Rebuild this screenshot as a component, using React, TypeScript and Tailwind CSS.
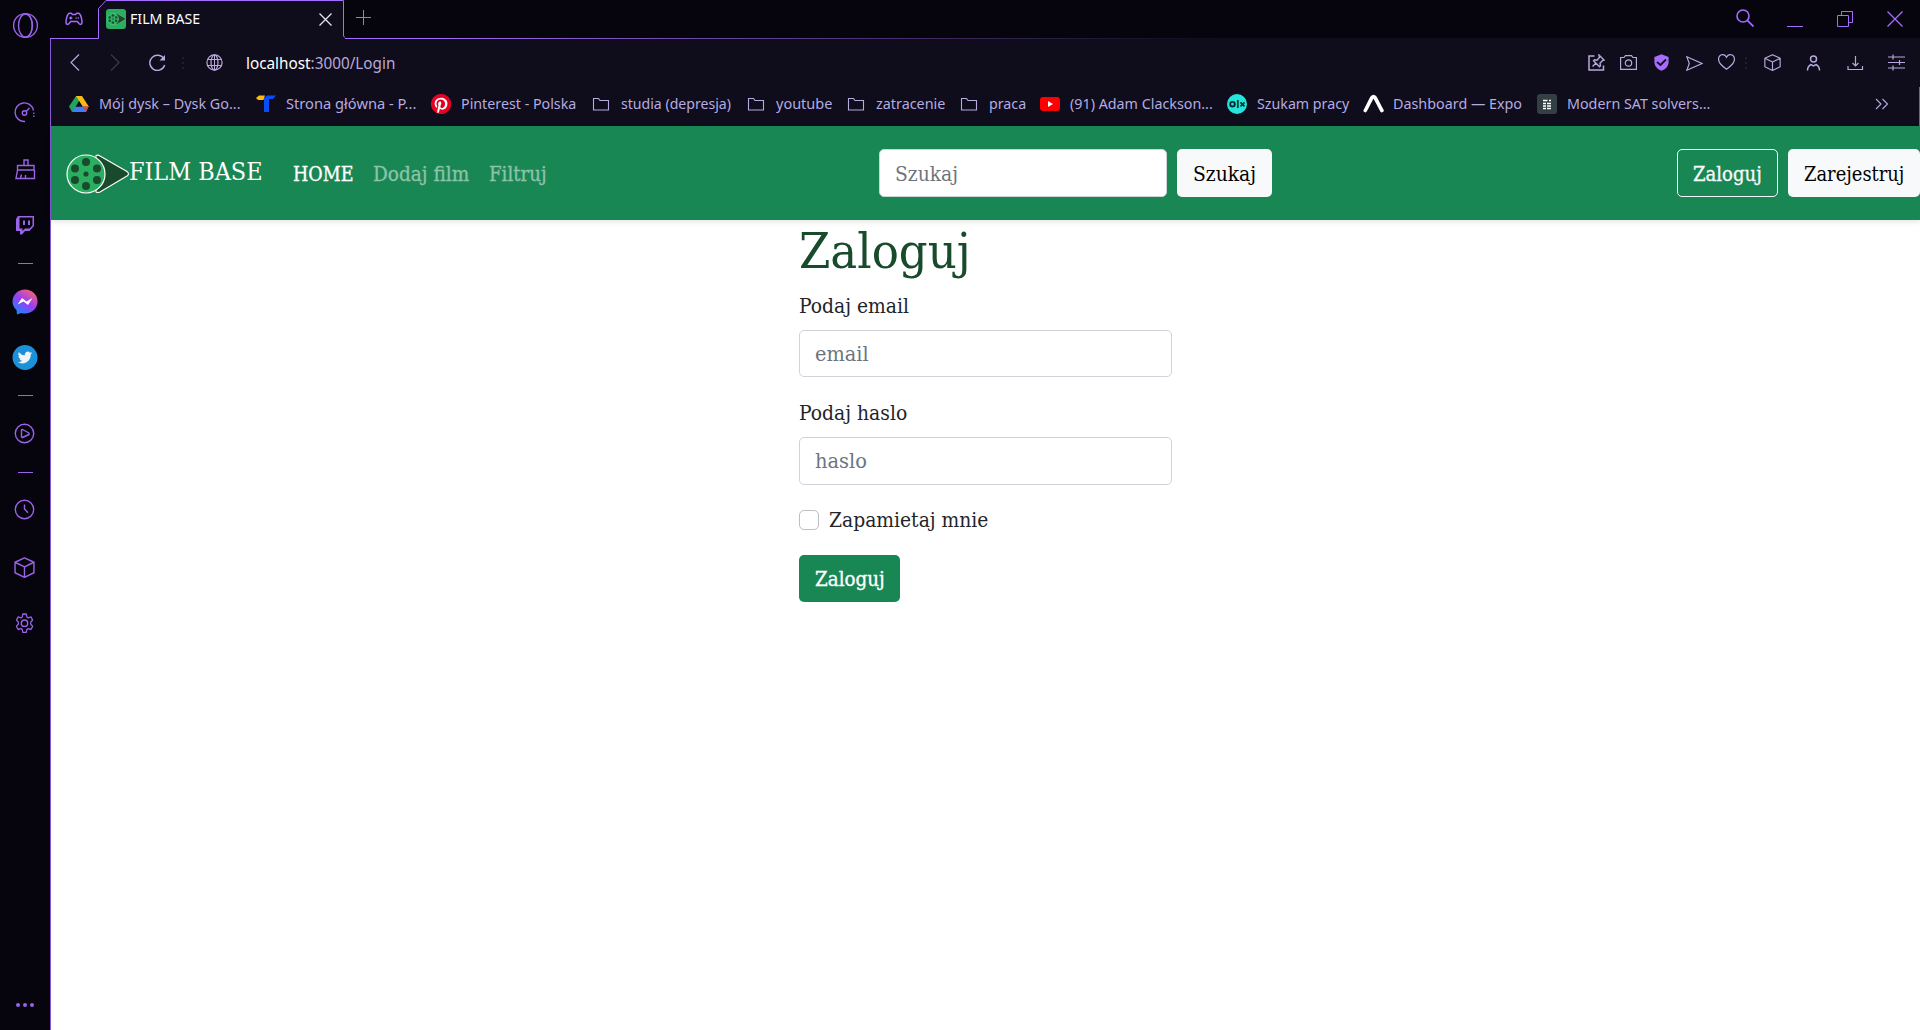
import { useLayoutEffect, useRef, useState, type ReactNode } from "react";

/** Text that is condensed or widened to occupy a known width. */
function Fit({ w, className = "", children }: { w: number; className?: string; children: ReactNode }) {
  const ref = useRef<HTMLSpanElement>(null);
  const [scale, setScale] = useState(1);
  useLayoutEffect(() => {
    if (ref.current) setScale(w / ref.current.offsetWidth);
  }, [w]);
  return (
    <span className={`block shrink-0 whitespace-pre ${className}`} style={{ width: w }}>
      <span ref={ref} className="inline-block origin-left" style={{ transform: `scaleX(${scale})` }}>
        {children}
      </span>
    </span>
  );
}

const SLAB = "font-['Roboto_Slab','DejaVu_Serif_Condensed','DejaVu_Serif',serif]";
const UI = "font-['Segoe_UI','Noto_Sans',sans-serif]";

function Svg({ w, h, className = "", children }: { w: number; h: number; className?: string; children: ReactNode }) {
  return (
    <svg
      width={w}
      height={h}
      viewBox={`0 0 ${w} ${h}`}
      fill="none"
      stroke="currentColor"
      strokeWidth="1.2"
      className={`block shrink-0 ${className}`}
    >
      {children}
    </svg>
  );
}

function Reel({ w, h, className = "", outline = "#ffffff" }: { w: number; h: number; className?: string; outline?: string }) {
  return (
    <svg width={w} height={h} viewBox="0 0 64 40" className={`block shrink-0 ${className}`}>
      <path d="M30 1.5Q32 .5 34 2L61 17.500Q64 20 61 22L34 38Q32 39 30 38Z" fill="#1a4a2c" stroke={outline} strokeWidth="1.1" />
      <circle cx="20" cy="20" r="19" fill="#2aae60" stroke={outline} strokeWidth="1.2" />
      <g fill="#1a4a2c">
        <circle cx="20" cy="8" r="4" />
        <circle cx="31" cy="14.500" r="4" />
        <circle cx="31" cy="26" r="4" />
        <circle cx="20" cy="32" r="4" />
        <circle cx="9" cy="26" r="4" />
        <circle cx="9" cy="14.500" r="4" />
        <circle cx="20" cy="20" r="2.600" />
      </g>
    </svg>
  );
}

function Cube({ w, className = "" }: { w: number; className?: string }) {
  return (
    <svg width={w} height={w} viewBox="0 0 20 20" fill="none" stroke="currentColor" strokeWidth="1.35" strokeLinejoin="round" className={`block shrink-0 ${className}`}>
      <path d="M10 .8 19 5v10l-9 4.300L1 15V5ZM1 5l9 4.500L19 5M10 9.500v9.800" />
    </svg>
  );
}

function Sidebar() {
  const dash = "h-px w-[15px] shrink-0 ml-1.5 bg-[#9a63e8]";
  return (
    <aside className="flex w-[50px] shrink-0 flex-col bg-[#06040d] pl-3 text-[#9a63e8]">
      <Svg w={27} h={26} className="mt-3">
        <circle cx="13.500" cy="13.500" r="11.900" strokeWidth="1.400" />
        <ellipse cx="13.500" cy="13.500" rx="7" ry="11.500" strokeWidth="1.400" />
        <path d="M15.500 2.200c6 4 6 18.500 0 22.600" strokeWidth="1.100" />
      </Svg>
      <Svg w={26} h={26} className="mt-[61px]">
        <path d="M13 22.500A9.300 9.300 0 1 1 21.500 11.500" strokeWidth="1.400" />
        <path d="M21.800 13.500v1.500M21.800 16.500v1.500" strokeWidth="1.300" />
        <circle cx="12.500" cy="14" r="2.200" strokeWidth="1.400" />
        <path d="m14 12.500 3.500-3.500" strokeWidth="1.400" />
      </Svg>
      <Svg w={26} h={26} className="mt-[31px]">
        <path d="M12 9V4h4v5M5.500 9.500H22V14H5.500ZM5.500 14 4 22.500h18.500V14M8.500 22.500l1-4M13.500 22.500V19" strokeWidth="1.400" />
      </Svg>
      <Svg w={26} h={26} className="mt-[30px]">
        <path d="M4 7 6 4h16v10l-4.500 5H13l-3 3.500H8V19H4Z" fill="currentColor" stroke="none" />
        <path d="M7.500 5.500h13v8l-3 3H13l-2.500 2.500v-2.500h-3Z" fill="#06040d" stroke="none" />
        <path d="M12 8.500v4.500M17 8.500v4.500" strokeWidth="2" />
      </Svg>
      <div className={`${dash} mt-[25px]`} />
      <svg width="26" height="26" viewBox="0 0 26 26" className="mt-[25px] block shrink-0">
        <defs>
          <linearGradient id="msg" x1="0.200" y1="1" x2="0.850" y2="0">
            <stop offset="0" stopColor="#118bff" />
            <stop offset="0.500" stopColor="#9a3cf5" />
            <stop offset="1" stopColor="#ff6968" />
          </linearGradient>
        </defs>
        <path d="M13 .5C6 .5.500 5.700.500 12.500c0 3.500 1.500 6.500 4 8.600L5 25.500l4-1.500c1.300.4 2.600.5 4 .5 7 0 12.500-5.200 12.500-12S20 .5 13 .5Z" fill="url(#msg)" />
        <path d="m5.500 15.500 4.500-6.500 4.500 3.500 6-3.500-4.500 7-4.500-3.500Z" fill="#fff" />
      </svg>
      <svg width="26" height="26" viewBox="0 0 26 26" className="mt-[30px] block shrink-0">
        <circle cx="13" cy="12.500" r="12.500" fill="#1b91da" />
        <path
          transform="translate(5.800 5.300) scale(.6)"
          fill="#f2f4f5"
          d="M24 4.600a10 10 0 0 1-2.800.8 5 5 0 0 0 2.100-2.700c-1 .6-2 1-3.100 1.200a4.900 4.900 0 0 0-8.400 4.500A14 14 0 0 1 1.700 3.100a4.900 4.900 0 0 0 1.500 6.600c-.8 0-1.600-.2-2.200-.6a4.900 4.900 0 0 0 3.900 4.900c-.7.200-1.500.2-2.200.1a4.900 4.900 0 0 0 4.600 3.400A9.900 9.900 0 0 1 0 19.500 14 14 0 0 0 21.500 7.100 10 10 0 0 0 24 4.600Z"
        />
      </svg>
      <div className={`${dash} mt-6`} />
      <Svg w={26} h={26} className="mt-6">
        <circle cx="12.500" cy="13.500" r="9.200" strokeWidth="1.400" />
        <path d="M9.500 10v7l1 .5 6.500-3v-1.500l-6.500-3.500Z" strokeWidth="1.400" strokeLinejoin="round" />
      </Svg>
      <div className={`${dash} mt-[26px]`} />
      <Svg w={26} h={26} className="mt-[23px]">
        <circle cx="12.500" cy="13.500" r="9.200" strokeWidth="1.400" />
        <path d="M12.500 8.500V13l3.500 3.800" strokeWidth="1.400" />
      </Svg>
      <Cube w={21} className="mt-[35px] ml-0.5" />
      <Svg w={26} h={26} className="mt-[32px]">
        <path
          d="M10.600 4h3.800l.7 3 1.500.8 3-.9 1.900 3.200-2.200 2.200v1.800l2.200 2.200-1.900 3.200-3-.9-1.500.8-.7 3h-3.800l-.7-3-1.500-.8-3 .9-1.900-3.200 2.200-2.200v-1.800l-2.200-2.200 1.900-3.200 3 .9 1.500-.8Z"
          transform="translate(1.300 0) scale(.9 1)"
          strokeWidth="1.400"
          strokeLinejoin="round"
        />
        <circle cx="12.500" cy="13.200" r="3.200" strokeWidth="1.400" />
      </Svg>
      <div className="mt-auto mb-[23px] ml-1 flex gap-[3px]">
        <i className="size-1 rounded-full bg-[#9a63e8]" />
        <i className="size-1 rounded-full bg-[#9a63e8]" />
        <i className="size-1 rounded-full bg-[#9a63e8]" />
      </div>
    </aside>
  );
}

function TabStrip() {
  return (
    <div className="flex h-[39px] bg-[#06040d] text-[#a66cff]">
      <div className="flex w-12 items-center border-b border-[#a66cff] pl-[15px]">
        <Svg w={18} h={14}>
          <path
            d="M4.500 1.200h1.800L7.500 2.500h3l1.200-1.300h1.800c2.200.3 3.500 6 3.500 9 0 2.600-2 2.600-3 1.400L12.200 9.500H5.800L4 11.600c-1 1.200-3 1.200-3-1.400 0-3 1.300-8.700 3.500-9Z"
            strokeWidth="1.500"
            strokeLinejoin="round"
          />
          <path d="M4.300 6h3M5.800 4.500v3M10.500 6h1.200M12.700 6h1.200" strokeWidth="1.300" />
        </Svg>
      </div>
      <div className="relative flex w-[247px] items-center pb-[2px] pl-2">
        <svg width="247" height="39" viewBox="0 0 247 39" className="absolute inset-0" fill="#0f0c1b">
          <path d="M.5 39V8.500L8 .5h237.500V36l2.500 2.500V39Z" />
          <path d="M0 38.500H.5V8.500L8 .5h237.500V36l2.500 2.500" fill="none" stroke="#a66cff" />
        </svg>
        <div className="relative flex size-5 items-center justify-center rounded-[3px] bg-[#2aae60]">
          <Reel w={19} h={12} outline="#8ed9ab" />
        </div>
        <Fit w={70} className={`relative ml-1 text-[15px] text-white ${UI}`}>FILM BASE</Fit>
        <Svg w={13} h={13} className="relative mt-0.5 ml-[119px] text-[#e8e4f0]">
          <path d="m.5.500 12 12M12.500.500l-12 12" strokeWidth="1.300" />
        </Svg>
      </div>
      <div className="flex flex-1 flex-col">
        <div className="flex flex-1 items-start">
          <Svg w={15} h={15} className="mt-[10px] ml-[11px]">
            <path d="M7.500 0v15M0 7.500h15" strokeWidth="1" />
          </Svg>
          <Svg w={18} h={18} className="mt-[9px] ml-auto">
            <circle cx="7" cy="7" r="6" strokeWidth="1.600" />
            <path d="m11.300 11.300 6.200 6.200" strokeWidth="1.700" />
          </Svg>
          <div className="mt-[26px] ml-[33px] h-px w-4 bg-[#a66cff]" />
          <Svg w={16} h={16} className="mt-[11px] ml-[34px]">
            <path d="M.5 4.500h11v11H.5ZM4.500 4.500v-4h11v11h-4" strokeWidth="1" />
          </Svg>
          <Svg w={16} h={16} className="mt-[11px] mr-[17px] ml-[34px]">
            <path d="m.5.500 15 15M15.500.500l-15 15" strokeWidth="1.300" />
          </Svg>
        </div>
        <div className="h-px bg-linear-to-r from-[#a66cff] from-5% to-[#0f0c1b] to-55%" />
      </div>
    </div>
  );
}

function Dots({ className }: { className: string }) {
  return (
    <div className={`flex shrink-0 flex-col gap-[3px] ${className}`}>
      <i className="h-0.5 w-0.5 bg-[#221c3b]" />
      <i className="h-0.5 w-0.5 bg-[#221c3b]" />
      <i className="h-0.5 w-0.5 bg-[#221c3b]" />
    </div>
  );
}

function AddressBar() {
  return (
    <div className="flex h-12 items-center pb-px text-[#b8a9dc]">
      <Svg w={10} h={17} className="ml-[19px]">
        <path d="M9 .5 1 8.500l8 8" />
      </Svg>
      <Svg w={10} h={17} className="ml-[30px] text-[#3d3655]">
        <path d="m1 .5 8 8-8 8" />
      </Svg>
      <Svg w={17} h={17} className="ml-[29px]">
        <path d="M15.700 11A7.600 7.600 0 1 1 15 5" strokeWidth="1.400" />
        <path d="M16 1v5.500h-5.500Z" fill="currentColor" stroke="none" />
      </Svg>
      <Dots className="ml-4" />
      <Svg w={17} h={17} className="mb-px ml-[22px]">
        <circle cx="8.500" cy="8.500" r="7.600" />
        <ellipse cx="8.500" cy="8.500" rx="3.500" ry="7.600" />
        <path d="M1.800 5.500h13.400M1.800 11.500h13.400M8.500 1v15" strokeWidth="1" />
      </Svg>
      <div className={`ml-[23px] pt-px text-[16px] ${UI}`}>
        <Fit w={149}>
          <span className="text-white">localhost</span>:3000/Login
        </Fit>
      </div>
      <Svg w={17} h={17} className="ml-auto">
        <path d="M6.500 2H1v14h14.500v-4.500" strokeWidth="1.500" />
        <path d="m11 1 5 5-1.500.5-2.500 2.800.5 2.500-1 1-6-6 1-1 2.500.5 2.500-3ZM8 9l-3.500 3.500" strokeWidth="1.400" />
      </Svg>
      <Svg w={17} h={15} className="ml-[15px]">
        <path d="M.6 2.500H4L5.500.600h6L13 2.500h3.400v11.900H.6Z" />
        <circle cx="8.500" cy="8" r="3.200" />
      </Svg>
      <Svg w={15} h={17} className="ml-[17px]">
        <path d="M7.500.200 14.600 3v5c0 4.500-3.500 7.500-7.100 8.800C4 15.500.400 12.500.400 8V3Z" fill="#a66cff" stroke="none" />
        <path d="m3 8 3.500 3L12 5.500" stroke="#0f0c1b" strokeWidth="1.800" />
      </Svg>
      <Svg w={17} h={15} className="mt-0.5 ml-[17px]">
        <path d="M.8.800 16 7.500.800 14.200 3.300 7.500Z" />
      </Svg>
      <Svg w={17} h={16} className="mb-0.5 ml-[15px]">
        <path d="M8.500 3.200C7 .2 3.200-.1 1.500 2.200c-1.800 2.600-.7 5.800 1.500 8.300 1.700 1.900 3.600 3.400 5.500 4.700 1.900-1.300 3.800-2.800 5.500-4.700 2.200-2.500 3.300-5.700 1.500-8.300C13.800-.1 10 .2 8.500 3.200Z" />
      </Svg>
      <Dots className="ml-[10px]" />
      <Cube w={17} className="ml-[17px]" />
      <Svg w={15} h={16} className="ml-[25px]">
        <circle cx="7.500" cy="4" r="3" strokeWidth="1.500" />
        <path d="M1.500 15.500c0-3 1.500-5 3.500-6l2.500 1.500L10 9.500c2 1 3.500 3 3.500 6" strokeWidth="1.500" />
      </Svg>
      <Svg w={17} h={16} className="ml-[26px]">
        <path d="M8.500 1v10M5.500 8l3 3 3-3M1 11v3.500h14.500V11" />
      </Svg>
      <Svg w={17} h={17} className="mr-[15px] ml-[24px]">
        <path d="M0 3h17M0 8.500h17M0 14h17M5 .5v5M11.500 6v5M5 11.500v5" />
      </Svg>
    </div>
  );
}

const Folder = () => (
  <Svg w={20} h={16} className="text-[#b4abe0]">
    <path d="M2.500 2.500h5l1.500 2h8.500v9.500h-15Z" strokeWidth="1.100" />
  </Svg>
);

const icons: Record<string, ReactNode> = {
  drive: (
    <svg width="20" height="18" viewBox="0 0 20 18">
      <path d="M7 1h6L6 13l-3 4-3-5.500Z" fill="#22a455" />
      <path d="M7 1h6l7 11h-6Z" fill="#fdb913" />
      <path d="M5.500 11.500H19.500L17 17H3Z" fill="#3b7ff0" />
      <path d="m14 11.500 5.500 0L17 17Z" fill="#ea4335" />
      <path d="m10 6.500 3 5H7Z" fill="#0f0c1b" />
    </svg>
  ),
  trojmiasto: (
    <svg width="20" height="18" viewBox="0 0 20 18">
      <path d="M0 3 3 .500h6L7.500 5H2Z" fill="#fdb913" />
      <path d="M8 3 11 .500h9L17 4h-4v13H8Z" fill="#0b4df5" />
    </svg>
  ),
  pinterest: (
    <svg width="20" height="20" viewBox="0 0 24 24">
      <circle cx="12" cy="12" r="11.500" fill="#fff" />
      <path
        fill="#e60023"
        d="M12 0C5.400 0 0 5.400 0 12c0 5.100 3.200 9.400 7.600 11.200-.1-.9-.2-2.400 0-3.400l1.400-6s-.4-.7-.4-1.800c0-1.700 1-2.900 2.200-2.900 1 0 1.500.8 1.500 1.700 0 1-.7 2.600-1 4-.3 1.200.6 2.200 1.800 2.200 2.100 0 3.800-2.200 3.800-5.500 0-2.900-2.100-4.900-5-4.900-3.400 0-5.400 2.600-5.400 5.200 0 1 .4 2.100.9 2.700.1.100.1.200.1.300l-.3 1.400c0 .2-.2.300-.4.200-1.500-.7-2.400-2.900-2.400-4.600 0-3.800 2.700-7.300 7.900-7.300 4.100 0 7.400 3 7.400 6.900 0 4.100-2.600 7.500-6.200 7.500-1.200 0-2.400-.6-2.800-1.400l-.7 2.800c-.3 1-1 2.300-1.500 3.100A12 12 0 1 0 12 0Z"
      />
    </svg>
  ),
  folder: <Folder />,
  youtube: (
    <svg width="20" height="14" viewBox="0 0 20 14">
      <rect width="20" height="14" rx="3" fill="#f00" />
      <path d="m8 4 5 3-5 3Z" fill="#fff" />
    </svg>
  ),
  olx: (
    <svg width="20" height="20" viewBox="0 0 20 20" fill="none" stroke="#06302f">
      <circle cx="10" cy="10" r="10" fill="#23e5db" stroke="none" />
      <circle cx="5.500" cy="10.200" r="2.300" strokeWidth="1.900" />
      <path d="M10.800 6v8" strokeWidth="1.700" />
      <path d="m13.500 8.300 4 4M17.500 8.300l-4 4" strokeWidth="1.700" />
    </svg>
  ),
  expo: (
    <svg width="21" height="19" viewBox="0 0 21 19" className="shrink-0" fill="none">
      <path d="M2.300 16.500C5 11.500 7 7 9 3.500q1.500-2 3 0c2 3.500 4 8 6.900 13" stroke="#fff" strokeWidth="3.600" strokeLinecap="round" />
    </svg>
  ),
  modern: (
    <svg width="20" height="20" viewBox="0 0 20 20">
      <rect width="20" height="20" rx="3" fill="#343f44" />
      <path d="M6 6.500h4.500M12 6.500h2M6 9.500h3M10 9.500h4M6 12h3M10 12h4M6 14.500h3M10 14.500h4" stroke="#fff" strokeWidth="1.300" />
    </svg>
  ),
};

const bookmarks = [
  { icon: "drive", text: "Mój dysk – Dysk Go...", slot: 187, w: 142 },
  { icon: "trojmiasto", text: "Strona główna - P...", slot: 175, w: 130 },
  { icon: "pinterest", text: "Pinterest - Polska", slot: 160, w: 115 },
  { icon: "folder", text: "studia (depresja)", slot: 155, w: 110 },
  { icon: "folder", text: "youtube", slot: 100, w: 56 },
  { icon: "folder", text: "zatracenie", slot: 113, w: 69 },
  { icon: "folder", text: "praca", slot: 81, w: 37 },
  { icon: "youtube", text: "(91) Adam Clackson...", slot: 187, w: 143 },
  { icon: "olx", text: "Szukam pracy", slot: 136, w: 92 },
  { icon: "expo", text: "Dashboard — Expo", slot: 174, w: 129 },
  { icon: "modern", text: "Modern SAT solvers...", slot: 187, w: 143 },
];

function Bookmarks() {
  return (
    <div className="flex h-[39px] items-center border-r border-[#6d6685] pb-[6px] pl-[18px] text-[#b4abe0]">
      {bookmarks.map((b) => (
        <div key={b.text} className="flex shrink-0 items-center" style={{ width: b.slot }}>
          <span className="flex w-5 shrink-0 justify-center">{icons[b.icon]}</span>
          <Fit w={b.w} className={`ml-[10px] pb-px text-[15px] leading-5 ${UI}`}>{b.text}</Fit>
        </div>
      ))}
      <Svg w={14} h={12} className="mr-[30px] ml-auto">
        <path d="m1 1 5 5-5 5M7.500 1l5 5-5 5" strokeWidth="1.100" />
      </Svg>
    </div>
  );
}

function SiteNav() {
  return (
    <nav className={`relative flex h-[94px] shrink-0 items-center bg-[#198754] text-[19.500px] leading-[30px] shadow-[0_2px_5px_rgba(0,0,0,0.1)] ${SLAB}`}>
      <Reel w={64} h={40} className="mt-[2px] ml-[15px]" />
      <Fit w={134} className="-ml-px pb-[2px] text-[24.500px] text-white">FILM BASE</Fit>
      <Fit w={60} className="ml-[30px] pt-[3px] text-white [-webkit-text-stroke:0.3px_white]">HOME</Fit>
      <Fit w={96} className="ml-[20px] pt-[3px] text-[#8cc3a9] [-webkit-text-stroke:0.3px_#8cc3a9]">Dodaj film</Fit>
      <Fit w={58} className="ml-[20px] pt-[3px] text-[#8cc3a9] [-webkit-text-stroke:0.3px_#8cc3a9]">Filtruj</Fit>
      <div className="ml-[332px] flex h-12 w-[288px] items-center rounded-[5px] border border-[#ced4da] bg-white px-[15px] pt-[3px] text-[#6c757d]">
        <Fit w={63}>Szukaj</Fit>
      </div>
      <div className="ml-[10px] flex h-12 w-[95px] items-center justify-center rounded-[5px] bg-[#f8f9fa] pt-[3px] text-black">
        <Fit w={63}>Szukaj</Fit>
      </div>
      <div className="ml-auto flex h-12 w-[101px] items-center justify-center rounded-[5px] border border-[#f8f9fa] pt-[3px] text-[#f8f9fa]">
        <Fit w={69} className="[-webkit-text-stroke:0.3px_#f8f9fa]">Zaloguj</Fit>
      </div>
      <div className="ml-[10px] flex h-12 w-[132px] items-center justify-center rounded-[5px] bg-[#f8f9fa] pt-[3px] text-black">
        <Fit w={100}>Zarejestruj</Fit>
      </div>
    </nav>
  );
}

function LoginForm() {
  return (
    <main className={`ml-[748px] flex w-[373px] flex-col text-[19.500px] leading-[30px] text-[#212529] ${SLAB}`}>
      <Fit w={172} className="pt-[2px] text-[49px] leading-[60px] text-[#184a2c]">Zaloguj</Fit>
      <Fit w={110} className="mt-[10px]">Podaj email</Fit>
      <div className="mt-[8px] flex h-[47px] items-center rounded-[5px] border border-[#ced4da] px-[15px] pt-[2px] text-[#6c757d]">
        <Fit w={54}>email</Fit>
      </div>
      <Fit w={108} className="mt-[22px]">Podaj haslo</Fit>
      <div className="mt-[8px] flex h-12 items-center rounded-[5px] border border-[#ced4da] px-[15px] pt-[2px] text-[#6c757d]">
        <Fit w={52}>haslo</Fit>
      </div>
      <div className="mt-5 flex h-[30px] items-center">
        <span className="size-5 rounded-[5px] border border-[#bfbfbf]" />
        <Fit w={159} className="ml-[10px] pt-[2px]">Zapamietaj mnie</Fit>
      </div>
      <div className="mt-5 flex h-[47px] w-[101px] items-center justify-center rounded-[5px] bg-[#198754] pt-[2px] text-white">
        <Fit w={70} className="[-webkit-text-stroke:0.3px_white]">Zaloguj</Fit>
      </div>
    </main>
  );
}

export default function App() {
  return (
    <div className="flex h-[1030px] w-[1920px] overflow-hidden bg-[#06040d]">
      <Sidebar />
      <div className="flex min-w-0 flex-1 flex-col">
        <TabStrip />
        <div className="flex flex-1 flex-col border-l border-[#8a58d6] bg-[#0f0c1b]">
          <AddressBar />
          <Bookmarks />
          <div className="flex flex-1 flex-col bg-white">
            <SiteNav />
            <LoginForm />
          </div>
        </div>
      </div>
    </div>
  );
}
